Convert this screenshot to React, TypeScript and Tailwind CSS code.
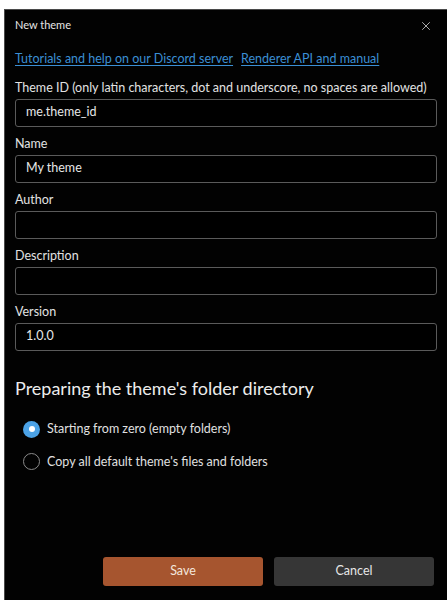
import { X } from "lucide-react";

const fields = [
  { label: "Theme ID (only latin characters, dot and underscore, no spaces are allowed)", value: "me.theme_id" },
  { label: "Name", value: "My theme" },
  { label: "Author", value: "" },
  { label: "Description", value: "" },
  { label: "Version", value: "1.0.0" },
];

export default function App() {
  return (
    <div className="h-[600px] w-[447px] bg-white pl-[4px] pt-[9px] font-['Lato',sans-serif]">
      <div className="flex h-[591px] flex-col border-l border-t border-[#4a4a4a] bg-[#020202] pl-[10px] pr-[10px]">
        <div className="flex h-[30px] items-center justify-between pt-[1px]">
          <span className="text-[11px] text-[#e6e6e6]">New theme</span>
          <X className="mr-[4px] h-[14px] w-[14px] text-[#c4c4c4]" strokeWidth={1.5} />
        </div>

        <div className="mt-[10px] flex gap-[8px] text-[12.5px] text-[#3b8fd4]">
          <a className="underline underline-offset-2">Tutorials and help on our Discord server</a>
          <a className="underline underline-offset-2">Renderer API and manual</a>
        </div>

        <div className="mt-[11px] flex flex-col gap-[9px]">
          {fields.map((f) => (
            <div key={f.label} className="flex flex-col">
              <label className="h-[16px] text-[12.5px] leading-[16px] text-[#e2e2e2]">{f.label}</label>
              <div className="mt-[3px] flex h-[28px] items-center rounded-[3px] border border-[#5a5a5a] bg-black pl-[10px] text-[12.5px] text-[#e6e6e6]">
                {f.value}
              </div>
            </div>
          ))}
        </div>

        <h2 className="mt-[24px] text-[18px] text-[#ececec]">Preparing the theme's folder directory</h2>

        <div className="mt-[18px] flex flex-col gap-[14px] pl-[8px] text-[12.5px] text-[#e0e0e0]">
          <div className="flex items-center gap-[7px]">
            <span className="flex h-[17px] w-[17px] items-center justify-center rounded-full bg-[#4ba2e6]">
              <span className="h-[6px] w-[6px] rounded-full bg-white" />
            </span>
            <span>Starting from zero (empty folders)</span>
          </div>
          <div className="flex items-center gap-[7px]">
            <span className="h-[17px] w-[17px] rounded-full border border-[#8a8a8a]" />
            <span>Copy all default theme's files and folders</span>
          </div>
        </div>

        <div className="mt-auto mb-[14px] flex justify-end gap-[11px] pr-[3px]">
          <button className="h-[29px] w-[160px] rounded-[3px] bg-[#a6552f] text-[12.5px] text-[#f3e6dd]">Save</button>
          <button className="h-[29px] w-[160px] rounded-[3px] bg-[#363636] text-[12.5px] text-[#e6e6e6]">Cancel</button>
        </div>
      </div>
    </div>
  );
}
